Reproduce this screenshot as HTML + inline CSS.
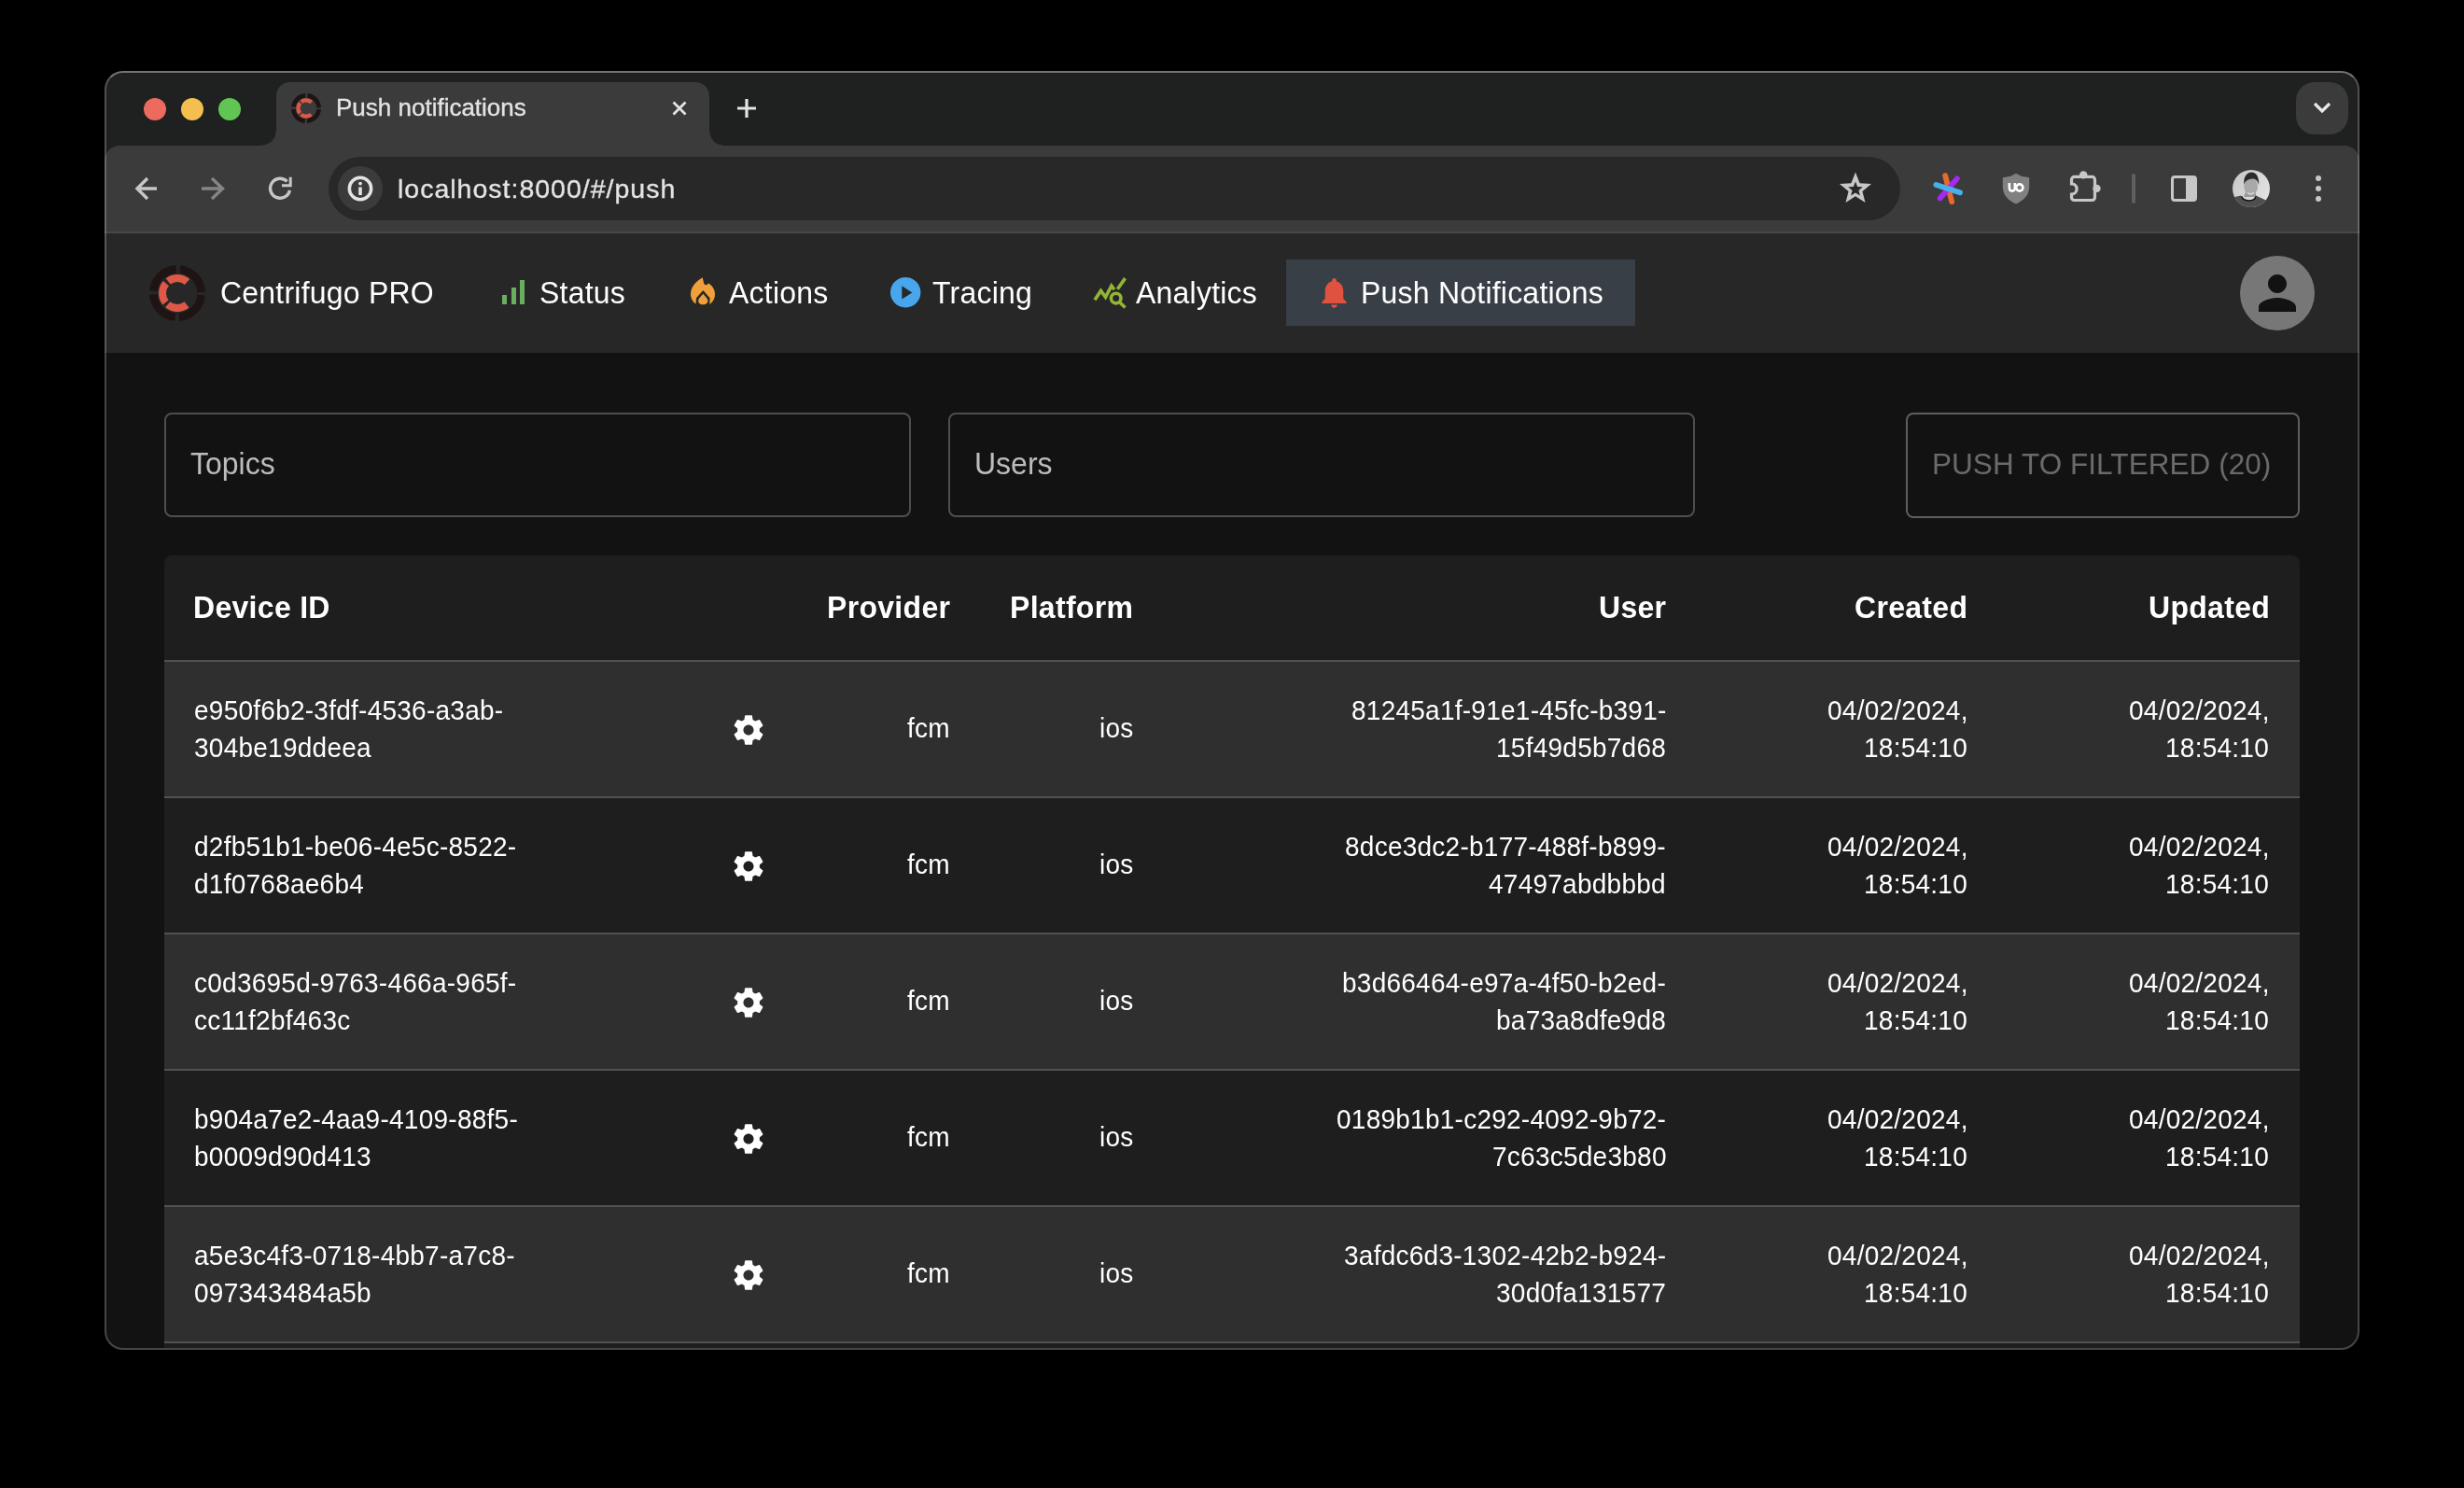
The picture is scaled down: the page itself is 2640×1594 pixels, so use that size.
<!DOCTYPE html>
<html><head><meta charset="utf-8">
<style>
html,body{margin:0;padding:0;}
body{width:2640px;height:1594px;background:#000;position:relative;overflow:hidden;font-family:"Liberation Sans",sans-serif;}
.a{position:absolute;}
.t{position:absolute;white-space:nowrap;will-change:transform;}
svg{position:absolute;overflow:visible;}
</style></head><body>
<div class="a" style="left:112px;top:76px;width:2416px;height:100px;background:#1f2020;border-radius:20px 20px 0 0;"></div>
<div class="a" style="left:112px;top:156px;width:2416px;height:92px;background:#3b3b3b;border-radius:16px 16px 0 0;"></div>
<div class="a" style="left:112px;top:248px;width:2416px;height:2px;background:#474948;"></div>
<div class="a" style="left:112px;top:250px;width:2416px;height:128px;background:#272727;"></div>
<div class="a" style="left:112px;top:378px;width:2416px;height:1068px;background:#121212;border-radius:0 0 20px 20px;"></div>
<div class="a" style="left:154px;top:105px;width:24px;height:24px;background:#ec6a5e;border-radius:50%;"></div>
<div class="a" style="left:194px;top:105px;width:24px;height:24px;background:#f4bf4f;border-radius:50%;"></div>
<div class="a" style="left:234px;top:105px;width:24px;height:24px;background:#61c554;border-radius:50%;"></div>
<svg style="left:276px;top:88px" width="504" height="68" viewBox="0 0 504 68"><path d="M0 68 C14 68 20 62 20 48 L20 16 C20 6 26 0 36 0 L468 0 C478 0 484 6 484 16 L484 48 C484 62 490 68 504 68 Z" fill="#3b3b3b"/></svg>
<svg style="left:312.0px;top:99.5px" width="32" height="32" viewBox="0 0 60 60"><circle cx="30" cy="30" r="25.7" fill="none" stroke="#1e1414" stroke-width="8.6" stroke-dasharray="35.969 4.4" stroke-dashoffset="-2.200"/><circle cx="30" cy="30" r="16" fill="none" stroke="#de5847" stroke-width="8" stroke-dasharray="0 14.166 21.933 3.2 21.933 3.2 21.933 14.166"/></svg>
<div class="t" style="left:360.00px;top:101.99px;font-size:26px;line-height:26px;color:#e3e3e3;font-weight:400;letter-spacing:0px;-webkit-text-stroke:0.35px #e3e3e3;">Push notifications</div>
<svg style="left:720px;top:108px" width="16" height="16" viewBox="0 0 16 16"><path d="M1.5 1.5 L14.5 14.5 M14.5 1.5 L1.5 14.5" stroke="#e3e3e3" stroke-width="2.8" stroke-linecap="butt"/></svg>
<svg style="left:790px;top:106px" width="20" height="20" viewBox="0 0 20 20"><path d="M10 0 V20 M0 10 H20" stroke="#e3e3e3" stroke-width="3.2"/></svg>
<div class="a" style="left:2460px;top:88px;width:56px;height:56px;background:#3b3b3b;border-radius:20px;"></div>
<svg style="left:2478px;top:109px" width="20" height="14" viewBox="0 0 20 14"><path d="M2 2 L10 10 L18 2" fill="none" stroke="#e8e8e8" stroke-width="3.2"/></svg>
<svg style="left:140px;top:186px" width="32" height="32" viewBox="0 0 32 32"><path d="M28 16 H7 M18 5 L7 16 L18 27" fill="none" stroke="#c7c7c7" stroke-width="3.4"/></svg>
<svg style="left:212px;top:186px" width="32" height="32" viewBox="0 0 32 32"><path d="M4 16 H26 M15 5 L26.5 16 L15 27" fill="none" stroke="#858585" stroke-width="3.4"/></svg>
<svg style="left:284px;top:186px" width="32" height="32" viewBox="0 0 32 32"><path d="M23.6 8.4 A10.5 10.5 0 1 0 26.4 17.8" fill="none" stroke="#c7c7c7" stroke-width="3.4"/><path d="M18 12.7 H27.2 V3.7" fill="none" stroke="#c7c7c7" stroke-width="3"/></svg>
<div class="a" style="left:352px;top:168px;width:1684px;height:68px;background:#282828;border-radius:34px;"></div>
<div class="a" style="left:362px;top:178px;width:48px;height:48px;background:#3b3b3b;border-radius:50%;"></div>
<svg style="left:370px;top:186px" width="32" height="32" viewBox="0 0 32 32"><circle cx="16" cy="16" r="11.7" fill="none" stroke="#e3e3e3" stroke-width="3.5"/><circle cx="16" cy="10.6" r="1.9" fill="#e3e3e3"/><rect x="14.2" y="14.5" width="3.6" height="8.5" fill="#e3e3e3"/></svg>
<div class="t" style="left:426.00px;top:188.27px;font-size:28.5px;line-height:28.5px;color:#e3e3e3;font-weight:400;letter-spacing:1.0px;-webkit-text-stroke:0.35px #e3e3e3;">localhost:8000/#/push</div>
<svg style="left:1968px;top:181px" width="40" height="40" viewBox="0 0 40 40"><path d="M20.00,3.60 L24.58,15.19 L37.02,15.97 L27.42,23.91 L30.52,35.98 L20.00,29.30 L9.48,35.98 L12.58,23.91 L2.98,15.97 L15.42,15.19 Z" fill="#c7c7c7"/><path d="M20.00,13.50 L22.12,18.89 L27.89,19.24 L23.42,22.91 L24.88,28.51 L20.00,25.40 L15.12,28.51 L16.58,22.91 L12.11,19.24 L17.88,18.89 Z" fill="#282828"/></svg>
<svg style="left:2067px;top:182px" width="40" height="40" viewBox="0 0 40 40"><path d="M17.2 6.1 L24.2 34.1" stroke="#e8692e" stroke-width="5.8" stroke-linecap="round"/><path d="M29.8 9.3 L11.6 30.3" stroke="#a52aee" stroke-width="5.8" stroke-linecap="round"/><path d="M7.4 15.9 L33 24.3" stroke="#47b0ea" stroke-width="5.8" stroke-linecap="round"/></svg>
<svg style="left:2144px;top:185px" width="32" height="34" viewBox="0 0 32 34"><path d="M16 0.7 L21.7 3.8 L30.2 5.2 V15 C30.2 24 24 30 16 33.4 C8 30 1.8 24 1.8 15 V5.2 L10.3 3.8 Z" fill="#808080"/><path d="M8.9 11 V16.3 C8.9 18.6 10.2 19.6 11.9 19.6 C13.6 19.6 14.8 18.6 14.8 16.3 V11" fill="none" stroke="#fff" stroke-width="2.6"/><circle cx="19.8" cy="16" r="3.6" fill="none" stroke="#fff" stroke-width="2.6"/></svg>
<svg style="left:2205px;top:175px" width="60" height="60" viewBox="0 0 60 60"><path d="M17.5 14.4 H36.5 A3 3 0 0 1 39.5 17.4 V36.5 A3 3 0 0 1 36.5 39.5 H17.5 A3 3 0 0 1 14.5 36.5 V33 A5.6 5.6 0 0 0 14.5 21.8 V17.4 A3 3 0 0 1 17.5 14.4 Z" fill="none" stroke="#c7c7c7" stroke-width="3.2"/><circle cx="27.2" cy="12.4" r="4.2" fill="#c7c7c7"/><circle cx="41.5" cy="26.9" r="4.2" fill="#c7c7c7"/></svg>
<div class="a" style="left:2284px;top:186px;width:4px;height:32px;background:#5f5f5f;border-radius:2px;"></div>
<svg style="left:2324px;top:186px" width="32" height="32" viewBox="0 0 32 32"><rect x="3.5" y="3.5" width="25" height="25" rx="2.5" fill="none" stroke="#c7c7c7" stroke-width="3"/><rect x="18" y="3.5" width="10.5" height="25" fill="#c7c7c7"/></svg>
<svg style="left:2392px;top:182px" width="40" height="40" viewBox="0 0 40 40"><defs><clipPath id="avc"><circle cx="20" cy="20" r="20"/></clipPath><linearGradient id="avg" x1="0" y1="0" x2="1" y2="0.6"><stop offset="0" stop-color="#c6c6c6"/><stop offset="1" stop-color="#e2e2e2"/></linearGradient></defs><g clip-path="url(#avc)"><rect width="40" height="40" fill="url(#avg)"/><path d="M12 29 L14.5 22 L24 22 L25.5 29 Z" fill="#9a9a9a"/><path d="M-1 29.8 L8.9 27.6 C11.5 34.5 23.5 34.5 24.6 27.2 L41 35 V41 H-1 Z" fill="#4f4f4f"/><path d="M9.6 28.2 C11.5 34.2 23.2 34.6 25 28.6" fill="none" stroke="#111" stroke-width="1.5"/><ellipse cx="19.6" cy="17.8" rx="7.4" ry="9.6" fill="#a9a9a9"/><path d="M12.3 15.5 C11.5 7 16 2.6 20.5 2.6 C25.5 2.8 28.5 7.5 28.2 16 C27 11.5 24.5 9.2 20.5 9.6 C16 10 13.3 12.3 12.3 15.5 Z" fill="#2b2b2b"/><path d="M16 24.5 C18 26 21 26 23 24.3" fill="none" stroke="#dcdcdc" stroke-width="1.2"/></g></svg>
<div class="a" style="left:2481px;top:188px;width:6px;height:6px;background:#c7c7c7;border-radius:50%;"></div>
<div class="a" style="left:2481px;top:199px;width:6px;height:6px;background:#c7c7c7;border-radius:50%;"></div>
<div class="a" style="left:2481px;top:210px;width:6px;height:6px;background:#c7c7c7;border-radius:50%;"></div>
<svg style="left:160.0px;top:284.0px" width="60" height="60" viewBox="0 0 60 60"><circle cx="30" cy="30" r="25.7" fill="none" stroke="#1e1414" stroke-width="8.6" stroke-dasharray="35.969 4.4" stroke-dashoffset="-2.200"/><circle cx="30" cy="30" r="16" fill="none" stroke="#de5847" stroke-width="8" stroke-dasharray="0 14.166 21.933 3.2 21.933 3.2 21.933 14.166"/></svg>
<div class="t" style="left:235.80px;top:298.21px;font-size:32px;line-height:32px;color:#fff;font-weight:400;letter-spacing:0.22px;transform:scaleY(1.03);transform-origin:0 84.65%;">Centrifugo PRO</div>
<div class="a" style="left:538px;top:316px;width:5px;height:10px;background:#6aaf5f;"></div>
<div class="a" style="left:547.5px;top:308px;width:5px;height:18px;background:#6aaf5f;"></div>
<div class="a" style="left:557px;top:300px;width:5px;height:26px;background:#6aaf5f;"></div>
<div class="t" style="left:578.10px;top:298.21px;font-size:32px;line-height:32px;color:#fff;font-weight:400;letter-spacing:0.22px;transform:scaleY(1.03);transform-origin:0 84.65%;">Status</div>
<svg style="left:740px;top:296.8px" width="26" height="30" viewBox="0 0 26 30"><path fill-rule="evenodd" fill="#efa03b" d="M12.7 0.2 L14.2 6.6 C14.7 8.3 16.4 8.8 17.6 7.8 L19.5 6.4 C23.6 9.4 26 13.6 26 18.2 C26 23 23.6 26.8 20.3 29 L20.6 22.2 L13.3 14.1 L6 22.2 L5.5 28.6 C2.3 26.6 0 22.6 0 18 C0 10.5 5.5 4.5 12.7 0.2 Z M13.3 17.8 L17.4 22.4 C19.4 24.8 18.6 29.3 13.3 29.3 C8 29.3 7.2 24.8 9.2 22.4 Z"/></svg>
<div class="t" style="left:780.50px;top:298.21px;font-size:32px;line-height:32px;color:#fff;font-weight:400;letter-spacing:0.22px;transform:scaleY(1.03);transform-origin:0 84.65%;">Actions</div>
<svg style="left:953.8px;top:296.8px" width="32.4" height="32.4" viewBox="0 0 32 32"><path fill-rule="evenodd" fill="#48a6ec" d="M16 0 A16 16 0 1 1 15.99 0 Z M12.2 9.2 L12.2 23.2 L23 16.2 Z"/></svg>
<div class="t" style="left:999.00px;top:298.21px;font-size:32px;line-height:32px;color:#fff;font-weight:400;letter-spacing:0.22px;transform:scaleY(1.03);transform-origin:0 84.65%;">Tracing</div>
<svg style="left:1165px;top:290px" width="50" height="50" viewBox="0 0 50 50" fill="none" stroke="#93b535" stroke-width="3.6"><path d="M8 31.3 L14.5 21.4 L19.5 28.3 L25.9 16.2 L28.9 20.3" stroke-linejoin="miter"/><path d="M32.3 19.8 L40.5 8.1"/><circle cx="30.7" cy="29.6" r="5.3"/><path d="M34.6 33.8 L40.5 39.5"/></svg>
<div class="t" style="left:1216.50px;top:298.21px;font-size:32px;line-height:32px;color:#fff;font-weight:400;letter-spacing:0.22px;transform:scaleY(1.03);transform-origin:0 84.65%;">Analytics</div>
<div class="a" style="left:1378px;top:278px;width:374px;height:71px;background:#393f47;"></div>
<svg style="left:1409.8px;top:293.8px" width="39" height="39" viewBox="0 0 24 24"><path fill="#e05240" d="M12 22c1.1 0 2-.9 2-2h-4c0 1.1.89 2 2 2zm6-6v-5c0-3.07-1.64-5.64-4.5-6.32V4c0-.83-.67-1.5-1.5-1.5s-1.5.67-1.5 1.5v.68C7.63 5.36 6 7.92 6 11v5l-2 2v1h16v-1l-2-2z"/></svg>
<div class="t" style="left:1458.10px;top:298.21px;font-size:32px;line-height:32px;color:#fff;font-weight:400;letter-spacing:0.22px;transform:scaleY(1.03);transform-origin:0 84.65%;">Push Notifications</div>
<div class="a" style="left:2400px;top:274px;width:80px;height:80px;background:#777777;border-radius:50%;"></div>
<svg style="left:2410px;top:283.8px" width="60" height="60" viewBox="0 0 24 24"><path fill="#121212" d="M12 12c2.21 0 4-1.79 4-4s-1.79-4-4-4-4 1.79-4 4 1.79 4 4 4zm0 2c-2.67 0-8 1.34-8 4v2h16v-2c0-2.66-5.33-4-8-4z"/></svg>
<div class="a" style="left:176px;top:442px;width:800px;height:112px;background:transparent;box-sizing:border-box;border:2px solid #4e4e4e;border-radius:8px;"></div>
<div class="t" style="left:204.30px;top:481.41px;font-size:32px;line-height:32px;color:#bcbcbc;font-weight:400;letter-spacing:0px;transform:scaleY(1.04);transform-origin:0 84.65%;">Topics</div>
<div class="a" style="left:1016px;top:442px;width:800px;height:112px;background:transparent;box-sizing:border-box;border:2px solid #4e4e4e;border-radius:8px;"></div>
<div class="t" style="left:1043.50px;top:481.41px;font-size:32px;line-height:32px;color:#bcbcbc;font-weight:400;letter-spacing:0px;transform:scaleY(1.04);transform-origin:0 84.65%;">Users</div>
<div class="a" style="left:2042px;top:442px;width:422px;height:113px;background:transparent;box-sizing:border-box;border:2px solid #5e5e5e;border-radius:8px;"></div>
<div class="t" style="left:2070.00px;top:481.64px;font-size:31.5px;line-height:31.5px;color:#6a6a6a;font-weight:400;letter-spacing:0.05px;">PUSH TO FILTERED (20)</div>
<div class="a" style="left:176px;top:595px;width:2288px;height:849px;background:#1e1e1e;border-radius:8px 8px 0 0;"></div>
<div class="a" style="left:176px;top:707px;width:2288px;height:2px;background:#515151;"></div>
<div class="t" style="left:207.00px;top:635.31px;font-size:32px;line-height:32px;color:#fff;font-weight:700;letter-spacing:0.3px;transform:scaleY(1.02);transform-origin:0 84.65%;">Device ID</div>
<div class="t" style="right:1621.70px;top:635.31px;font-size:32px;line-height:32px;color:#fff;font-weight:700;letter-spacing:0.3px;text-align:right;transform:scaleY(1.02);transform-origin:0 84.65%;">Provider</div>
<div class="t" style="right:1425.70px;top:635.31px;font-size:32px;line-height:32px;color:#fff;font-weight:700;letter-spacing:0.3px;text-align:right;transform:scaleY(1.02);transform-origin:0 84.65%;">Platform</div>
<div class="t" style="right:854.70px;top:635.31px;font-size:32px;line-height:32px;color:#fff;font-weight:700;letter-spacing:0.3px;text-align:right;transform:scaleY(1.02);transform-origin:0 84.65%;">User</div>
<div class="t" style="right:531.70px;top:635.31px;font-size:32px;line-height:32px;color:#fff;font-weight:700;letter-spacing:0.3px;text-align:right;transform:scaleY(1.02);transform-origin:0 84.65%;">Created</div>
<div class="t" style="right:207.70px;top:635.31px;font-size:32px;line-height:32px;color:#fff;font-weight:700;letter-spacing:0.3px;text-align:right;transform:scaleY(1.02);transform-origin:0 84.65%;">Updated</div>
<div class="a" style="left:176px;top:709px;width:2288px;height:144px;background:#2f2f2f;"></div>
<div class="a" style="left:176px;top:853px;width:2288px;height:2px;background:#515151;"></div>
<div class="t" style="left:208.00px;top:747.50px;font-size:28px;line-height:28px;color:#fff;font-weight:400;letter-spacing:0.25px;transform:scaleY(1.05);transform-origin:0 84.65%;">e950f6b2-3fdf-4536-a3ab-</div>
<div class="t" style="left:208.00px;top:787.50px;font-size:28px;line-height:28px;color:#fff;font-weight:400;letter-spacing:0.25px;transform:scaleY(1.05);transform-origin:0 84.65%;">304be19ddeea</div>
<svg style="left:783px;top:763px" width="38" height="38" viewBox="0 0 24 24"><path fill="#fff" d="M19.43 12.98c.04-.32.07-.64.07-.98s-.03-.66-.07-.98l2.11-1.65c.19-.15.24-.42.12-.64l-2-3.46c-.12-.22-.39-.3-.61-.22l-2.49 1c-.52-.4-1.08-.73-1.69-.98l-.38-2.65C14.46 2.18 14.25 2 14 2h-4c-.25 0-.46.18-.49.42l-.38 2.65c-.61.25-1.17.59-1.69.98l-2.49-1c-.23-.09-.49 0-.61.22l-2 3.46c-.13.22-.07.49.12.64l2.11 1.65c-.04.32-.07.65-.07.98s.03.66.07.98l-2.11 1.65c-.19.15-.24.42-.12.64l2 3.46c.12.22.39.3.61.22l2.49-1c.52.4 1.08.73 1.69.98l.38 2.65c.03.24.24.42.49.42h4c.25 0 .46-.18.49-.42l.38-2.65c.61-.25 1.17-.59 1.69-.98l2.49 1c.23.09.49 0 .61-.22l2-3.46c.12-.22.07-.49-.12-.64l-2.11-1.65zM12 15.5c-1.93 0-3.5-1.57-3.5-3.5s1.57-3.5 3.5-3.5 3.5 1.57 3.5 3.5-1.57 3.5-3.5 3.5z"/></svg>
<div class="t" style="right:1621.75px;top:767.30px;font-size:28px;line-height:28px;color:#fff;font-weight:400;letter-spacing:0.25px;text-align:right;transform:scaleY(1.05);transform-origin:0 84.65%;">fcm</div>
<div class="t" style="right:1425.75px;top:767.30px;font-size:28px;line-height:28px;color:#fff;font-weight:400;letter-spacing:0.25px;text-align:right;transform:scaleY(1.05);transform-origin:0 84.65%;">ios</div>
<div class="t" style="right:854.75px;top:747.50px;font-size:28px;line-height:28px;color:#fff;font-weight:400;letter-spacing:0.25px;text-align:right;transform:scaleY(1.05);transform-origin:0 84.65%;">81245a1f-91e1-45fc-b391-</div>
<div class="t" style="right:854.75px;top:787.50px;font-size:28px;line-height:28px;color:#fff;font-weight:400;letter-spacing:0.25px;text-align:right;transform:scaleY(1.05);transform-origin:0 84.65%;">15f49d5b7d68</div>
<div class="t" style="right:531.75px;top:747.50px;font-size:28px;line-height:28px;color:#fff;font-weight:400;letter-spacing:0.25px;text-align:right;transform:scaleY(1.05);transform-origin:0 84.65%;">04/02/2024,</div>
<div class="t" style="right:531.75px;top:787.50px;font-size:28px;line-height:28px;color:#fff;font-weight:400;letter-spacing:0.25px;text-align:right;transform:scaleY(1.05);transform-origin:0 84.65%;">18:54:10</div>
<div class="t" style="right:208.75px;top:747.50px;font-size:28px;line-height:28px;color:#fff;font-weight:400;letter-spacing:0.25px;text-align:right;transform:scaleY(1.05);transform-origin:0 84.65%;">04/02/2024,</div>
<div class="t" style="right:208.75px;top:787.50px;font-size:28px;line-height:28px;color:#fff;font-weight:400;letter-spacing:0.25px;text-align:right;transform:scaleY(1.05);transform-origin:0 84.65%;">18:54:10</div>
<div class="a" style="left:176px;top:999px;width:2288px;height:2px;background:#515151;"></div>
<div class="t" style="left:208.00px;top:893.50px;font-size:28px;line-height:28px;color:#fff;font-weight:400;letter-spacing:0.25px;transform:scaleY(1.05);transform-origin:0 84.65%;">d2fb51b1-be06-4e5c-8522-</div>
<div class="t" style="left:208.00px;top:933.50px;font-size:28px;line-height:28px;color:#fff;font-weight:400;letter-spacing:0.25px;transform:scaleY(1.05);transform-origin:0 84.65%;">d1f0768ae6b4</div>
<svg style="left:783px;top:909px" width="38" height="38" viewBox="0 0 24 24"><path fill="#fff" d="M19.43 12.98c.04-.32.07-.64.07-.98s-.03-.66-.07-.98l2.11-1.65c.19-.15.24-.42.12-.64l-2-3.46c-.12-.22-.39-.3-.61-.22l-2.49 1c-.52-.4-1.08-.73-1.69-.98l-.38-2.65C14.46 2.18 14.25 2 14 2h-4c-.25 0-.46.18-.49.42l-.38 2.65c-.61.25-1.17.59-1.69.98l-2.49-1c-.23-.09-.49 0-.61.22l-2 3.46c-.13.22-.07.49.12.64l2.11 1.65c-.04.32-.07.65-.07.98s.03.66.07.98l-2.11 1.65c-.19.15-.24.42-.12.64l2 3.46c.12.22.39.3.61.22l2.49-1c.52.4 1.08.73 1.69.98l.38 2.65c.03.24.24.42.49.42h4c.25 0 .46-.18.49-.42l.38-2.65c.61-.25 1.17-.59 1.69-.98l2.49 1c.23.09.49 0 .61-.22l2-3.46c.12-.22.07-.49-.12-.64l-2.11-1.65zM12 15.5c-1.93 0-3.5-1.57-3.5-3.5s1.57-3.5 3.5-3.5 3.5 1.57 3.5 3.5-1.57 3.5-3.5 3.5z"/></svg>
<div class="t" style="right:1621.75px;top:913.30px;font-size:28px;line-height:28px;color:#fff;font-weight:400;letter-spacing:0.25px;text-align:right;transform:scaleY(1.05);transform-origin:0 84.65%;">fcm</div>
<div class="t" style="right:1425.75px;top:913.30px;font-size:28px;line-height:28px;color:#fff;font-weight:400;letter-spacing:0.25px;text-align:right;transform:scaleY(1.05);transform-origin:0 84.65%;">ios</div>
<div class="t" style="right:854.75px;top:893.50px;font-size:28px;line-height:28px;color:#fff;font-weight:400;letter-spacing:0.25px;text-align:right;transform:scaleY(1.05);transform-origin:0 84.65%;">8dce3dc2-b177-488f-b899-</div>
<div class="t" style="right:854.75px;top:933.50px;font-size:28px;line-height:28px;color:#fff;font-weight:400;letter-spacing:0.25px;text-align:right;transform:scaleY(1.05);transform-origin:0 84.65%;">47497abdbbbd</div>
<div class="t" style="right:531.75px;top:893.50px;font-size:28px;line-height:28px;color:#fff;font-weight:400;letter-spacing:0.25px;text-align:right;transform:scaleY(1.05);transform-origin:0 84.65%;">04/02/2024,</div>
<div class="t" style="right:531.75px;top:933.50px;font-size:28px;line-height:28px;color:#fff;font-weight:400;letter-spacing:0.25px;text-align:right;transform:scaleY(1.05);transform-origin:0 84.65%;">18:54:10</div>
<div class="t" style="right:208.75px;top:893.50px;font-size:28px;line-height:28px;color:#fff;font-weight:400;letter-spacing:0.25px;text-align:right;transform:scaleY(1.05);transform-origin:0 84.65%;">04/02/2024,</div>
<div class="t" style="right:208.75px;top:933.50px;font-size:28px;line-height:28px;color:#fff;font-weight:400;letter-spacing:0.25px;text-align:right;transform:scaleY(1.05);transform-origin:0 84.65%;">18:54:10</div>
<div class="a" style="left:176px;top:1001px;width:2288px;height:144px;background:#2f2f2f;"></div>
<div class="a" style="left:176px;top:1145px;width:2288px;height:2px;background:#515151;"></div>
<div class="t" style="left:208.00px;top:1039.50px;font-size:28px;line-height:28px;color:#fff;font-weight:400;letter-spacing:0.25px;transform:scaleY(1.05);transform-origin:0 84.65%;">c0d3695d-9763-466a-965f-</div>
<div class="t" style="left:208.00px;top:1079.50px;font-size:28px;line-height:28px;color:#fff;font-weight:400;letter-spacing:0.25px;transform:scaleY(1.05);transform-origin:0 84.65%;">cc11f2bf463c</div>
<svg style="left:783px;top:1055px" width="38" height="38" viewBox="0 0 24 24"><path fill="#fff" d="M19.43 12.98c.04-.32.07-.64.07-.98s-.03-.66-.07-.98l2.11-1.65c.19-.15.24-.42.12-.64l-2-3.46c-.12-.22-.39-.3-.61-.22l-2.49 1c-.52-.4-1.08-.73-1.69-.98l-.38-2.65C14.46 2.18 14.25 2 14 2h-4c-.25 0-.46.18-.49.42l-.38 2.65c-.61.25-1.17.59-1.69.98l-2.49-1c-.23-.09-.49 0-.61.22l-2 3.46c-.13.22-.07.49.12.64l2.11 1.65c-.04.32-.07.65-.07.98s.03.66.07.98l-2.11 1.65c-.19.15-.24.42-.12.64l2 3.46c.12.22.39.3.61.22l2.49-1c.52.4 1.08.73 1.69.98l.38 2.65c.03.24.24.42.49.42h4c.25 0 .46-.18.49-.42l.38-2.65c.61-.25 1.17-.59 1.69-.98l2.49 1c.23.09.49 0 .61-.22l2-3.46c.12-.22.07-.49-.12-.64l-2.11-1.65zM12 15.5c-1.93 0-3.5-1.57-3.5-3.5s1.57-3.5 3.5-3.5 3.5 1.57 3.5 3.5-1.57 3.5-3.5 3.5z"/></svg>
<div class="t" style="right:1621.75px;top:1059.30px;font-size:28px;line-height:28px;color:#fff;font-weight:400;letter-spacing:0.25px;text-align:right;transform:scaleY(1.05);transform-origin:0 84.65%;">fcm</div>
<div class="t" style="right:1425.75px;top:1059.30px;font-size:28px;line-height:28px;color:#fff;font-weight:400;letter-spacing:0.25px;text-align:right;transform:scaleY(1.05);transform-origin:0 84.65%;">ios</div>
<div class="t" style="right:854.75px;top:1039.50px;font-size:28px;line-height:28px;color:#fff;font-weight:400;letter-spacing:0.25px;text-align:right;transform:scaleY(1.05);transform-origin:0 84.65%;">b3d66464-e97a-4f50-b2ed-</div>
<div class="t" style="right:854.75px;top:1079.50px;font-size:28px;line-height:28px;color:#fff;font-weight:400;letter-spacing:0.25px;text-align:right;transform:scaleY(1.05);transform-origin:0 84.65%;">ba73a8dfe9d8</div>
<div class="t" style="right:531.75px;top:1039.50px;font-size:28px;line-height:28px;color:#fff;font-weight:400;letter-spacing:0.25px;text-align:right;transform:scaleY(1.05);transform-origin:0 84.65%;">04/02/2024,</div>
<div class="t" style="right:531.75px;top:1079.50px;font-size:28px;line-height:28px;color:#fff;font-weight:400;letter-spacing:0.25px;text-align:right;transform:scaleY(1.05);transform-origin:0 84.65%;">18:54:10</div>
<div class="t" style="right:208.75px;top:1039.50px;font-size:28px;line-height:28px;color:#fff;font-weight:400;letter-spacing:0.25px;text-align:right;transform:scaleY(1.05);transform-origin:0 84.65%;">04/02/2024,</div>
<div class="t" style="right:208.75px;top:1079.50px;font-size:28px;line-height:28px;color:#fff;font-weight:400;letter-spacing:0.25px;text-align:right;transform:scaleY(1.05);transform-origin:0 84.65%;">18:54:10</div>
<div class="a" style="left:176px;top:1291px;width:2288px;height:2px;background:#515151;"></div>
<div class="t" style="left:208.00px;top:1185.50px;font-size:28px;line-height:28px;color:#fff;font-weight:400;letter-spacing:0.25px;transform:scaleY(1.05);transform-origin:0 84.65%;">b904a7e2-4aa9-4109-88f5-</div>
<div class="t" style="left:208.00px;top:1225.50px;font-size:28px;line-height:28px;color:#fff;font-weight:400;letter-spacing:0.25px;transform:scaleY(1.05);transform-origin:0 84.65%;">b0009d90d413</div>
<svg style="left:783px;top:1201px" width="38" height="38" viewBox="0 0 24 24"><path fill="#fff" d="M19.43 12.98c.04-.32.07-.64.07-.98s-.03-.66-.07-.98l2.11-1.65c.19-.15.24-.42.12-.64l-2-3.46c-.12-.22-.39-.3-.61-.22l-2.49 1c-.52-.4-1.08-.73-1.69-.98l-.38-2.65C14.46 2.18 14.25 2 14 2h-4c-.25 0-.46.18-.49.42l-.38 2.65c-.61.25-1.17.59-1.69.98l-2.49-1c-.23-.09-.49 0-.61.22l-2 3.46c-.13.22-.07.49.12.64l2.11 1.65c-.04.32-.07.65-.07.98s.03.66.07.98l-2.11 1.65c-.19.15-.24.42-.12.64l2 3.46c.12.22.39.3.61.22l2.49-1c.52.4 1.08.73 1.69.98l.38 2.65c.03.24.24.42.49.42h4c.25 0 .46-.18.49-.42l.38-2.65c.61-.25 1.17-.59 1.69-.98l2.49 1c.23.09.49 0 .61-.22l2-3.46c.12-.22.07-.49-.12-.64l-2.11-1.65zM12 15.5c-1.93 0-3.5-1.57-3.5-3.5s1.57-3.5 3.5-3.5 3.5 1.57 3.5 3.5-1.57 3.5-3.5 3.5z"/></svg>
<div class="t" style="right:1621.75px;top:1205.30px;font-size:28px;line-height:28px;color:#fff;font-weight:400;letter-spacing:0.25px;text-align:right;transform:scaleY(1.05);transform-origin:0 84.65%;">fcm</div>
<div class="t" style="right:1425.75px;top:1205.30px;font-size:28px;line-height:28px;color:#fff;font-weight:400;letter-spacing:0.25px;text-align:right;transform:scaleY(1.05);transform-origin:0 84.65%;">ios</div>
<div class="t" style="right:854.75px;top:1185.50px;font-size:28px;line-height:28px;color:#fff;font-weight:400;letter-spacing:0.25px;text-align:right;transform:scaleY(1.05);transform-origin:0 84.65%;">0189b1b1-c292-4092-9b72-</div>
<div class="t" style="right:854.75px;top:1225.50px;font-size:28px;line-height:28px;color:#fff;font-weight:400;letter-spacing:0.25px;text-align:right;transform:scaleY(1.05);transform-origin:0 84.65%;">7c63c5de3b80</div>
<div class="t" style="right:531.75px;top:1185.50px;font-size:28px;line-height:28px;color:#fff;font-weight:400;letter-spacing:0.25px;text-align:right;transform:scaleY(1.05);transform-origin:0 84.65%;">04/02/2024,</div>
<div class="t" style="right:531.75px;top:1225.50px;font-size:28px;line-height:28px;color:#fff;font-weight:400;letter-spacing:0.25px;text-align:right;transform:scaleY(1.05);transform-origin:0 84.65%;">18:54:10</div>
<div class="t" style="right:208.75px;top:1185.50px;font-size:28px;line-height:28px;color:#fff;font-weight:400;letter-spacing:0.25px;text-align:right;transform:scaleY(1.05);transform-origin:0 84.65%;">04/02/2024,</div>
<div class="t" style="right:208.75px;top:1225.50px;font-size:28px;line-height:28px;color:#fff;font-weight:400;letter-spacing:0.25px;text-align:right;transform:scaleY(1.05);transform-origin:0 84.65%;">18:54:10</div>
<div class="a" style="left:176px;top:1293px;width:2288px;height:144px;background:#2f2f2f;"></div>
<div class="a" style="left:176px;top:1437px;width:2288px;height:2px;background:#515151;"></div>
<div class="t" style="left:208.00px;top:1331.50px;font-size:28px;line-height:28px;color:#fff;font-weight:400;letter-spacing:0.25px;transform:scaleY(1.05);transform-origin:0 84.65%;">a5e3c4f3-0718-4bb7-a7c8-</div>
<div class="t" style="left:208.00px;top:1371.50px;font-size:28px;line-height:28px;color:#fff;font-weight:400;letter-spacing:0.25px;transform:scaleY(1.05);transform-origin:0 84.65%;">097343484a5b</div>
<svg style="left:783px;top:1347px" width="38" height="38" viewBox="0 0 24 24"><path fill="#fff" d="M19.43 12.98c.04-.32.07-.64.07-.98s-.03-.66-.07-.98l2.11-1.65c.19-.15.24-.42.12-.64l-2-3.46c-.12-.22-.39-.3-.61-.22l-2.49 1c-.52-.4-1.08-.73-1.69-.98l-.38-2.65C14.46 2.18 14.25 2 14 2h-4c-.25 0-.46.18-.49.42l-.38 2.65c-.61.25-1.17.59-1.69.98l-2.49-1c-.23-.09-.49 0-.61.22l-2 3.46c-.13.22-.07.49.12.64l2.11 1.65c-.04.32-.07.65-.07.98s.03.66.07.98l-2.11 1.65c-.19.15-.24.42-.12.64l2 3.46c.12.22.39.3.61.22l2.49-1c.52.4 1.08.73 1.69.98l.38 2.65c.03.24.24.42.49.42h4c.25 0 .46-.18.49-.42l.38-2.65c.61-.25 1.17-.59 1.69-.98l2.49 1c.23.09.49 0 .61-.22l2-3.46c.12-.22.07-.49-.12-.64l-2.11-1.65zM12 15.5c-1.93 0-3.5-1.57-3.5-3.5s1.57-3.5 3.5-3.5 3.5 1.57 3.5 3.5-1.57 3.5-3.5 3.5z"/></svg>
<div class="t" style="right:1621.75px;top:1351.30px;font-size:28px;line-height:28px;color:#fff;font-weight:400;letter-spacing:0.25px;text-align:right;transform:scaleY(1.05);transform-origin:0 84.65%;">fcm</div>
<div class="t" style="right:1425.75px;top:1351.30px;font-size:28px;line-height:28px;color:#fff;font-weight:400;letter-spacing:0.25px;text-align:right;transform:scaleY(1.05);transform-origin:0 84.65%;">ios</div>
<div class="t" style="right:854.75px;top:1331.50px;font-size:28px;line-height:28px;color:#fff;font-weight:400;letter-spacing:0.25px;text-align:right;transform:scaleY(1.05);transform-origin:0 84.65%;">3afdc6d3-1302-42b2-b924-</div>
<div class="t" style="right:854.75px;top:1371.50px;font-size:28px;line-height:28px;color:#fff;font-weight:400;letter-spacing:0.25px;text-align:right;transform:scaleY(1.05);transform-origin:0 84.65%;">30d0fa131577</div>
<div class="t" style="right:531.75px;top:1331.50px;font-size:28px;line-height:28px;color:#fff;font-weight:400;letter-spacing:0.25px;text-align:right;transform:scaleY(1.05);transform-origin:0 84.65%;">04/02/2024,</div>
<div class="t" style="right:531.75px;top:1371.50px;font-size:28px;line-height:28px;color:#fff;font-weight:400;letter-spacing:0.25px;text-align:right;transform:scaleY(1.05);transform-origin:0 84.65%;">18:54:10</div>
<div class="t" style="right:208.75px;top:1331.50px;font-size:28px;line-height:28px;color:#fff;font-weight:400;letter-spacing:0.25px;text-align:right;transform:scaleY(1.05);transform-origin:0 84.65%;">04/02/2024,</div>
<div class="t" style="right:208.75px;top:1371.50px;font-size:28px;line-height:28px;color:#fff;font-weight:400;letter-spacing:0.25px;text-align:right;transform:scaleY(1.05);transform-origin:0 84.65%;">18:54:10</div>
<div class="a" style="left:112px;top:76px;width:2416px;height:1370px;border-radius:20px;box-sizing:border-box;border:2px solid rgba(255,255,255,0.225);pointer-events:none;"></div>
<div class="a" style="left:112px;top:76px;width:2416px;height:80px;border-radius:20px 20px 0 0;box-sizing:border-box;border:2px solid transparent;border-top-color:rgba(255,255,255,0.2);pointer-events:none;"></div>
</body></html>
